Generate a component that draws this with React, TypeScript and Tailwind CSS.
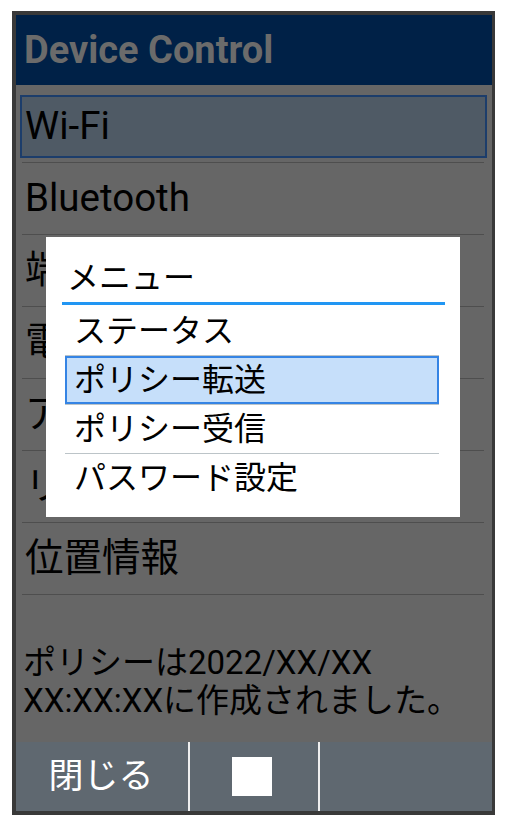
import React from 'react'

const rows = ['Wi-Fi', 'Bluetooth', '端末情報', '電話帳', 'アプリ管理', 'リモートロック', '位置情報']
const menu = ['ステータス', 'ポリシー転送', 'ポリシー受信', 'パスワード設定']

export default function App() {
  return (
    <div className="min-h-screen bg-white pt-[11px] pl-[12px] font-['Roboto','Noto_Sans_CJK_JP',sans-serif]">
      <div className="relative w-[483px] h-[804px] border-t-[4px] border-b-[4px] border-l-[4px] border-r-[3px] border-[#393939] bg-[#666666] flex flex-col">
        <div className="h-[70px] shrink-0 bg-[#002147] flex items-center pl-[8px]">
          <span className="text-[38px] font-bold text-[#6b6b6b] leading-none">Device Control</span>
        </div>

        <div className="mt-[6px] flex flex-col">
          {rows.map((label, i) => (
            <div key={label} className="h-[72px] flex flex-col">
              <div className="h-[71px] pt-[4px] pb-[4px] pl-[4px] pr-[5px] flex">
                <div
                  className={
                    i === 0
                      ? 'flex-1 flex items-center border-2 border-[#1c3d6b] bg-[#4f5a65] pl-[3px]'
                      : 'flex-1 flex items-center border-2 border-transparent pl-[3px]'
                  }
                >
                  <span className="text-[38.5px] text-black leading-none whitespace-nowrap">{label}</span>
                </div>
              </div>
              <div className="h-px ml-[6px] mr-[8px] bg-[#4e4e4e]" />
            </div>
          ))}
        </div>

        <div className="flex-1 flex flex-col justify-end pl-[7px] pb-[22px] text-[33px] leading-[38px] text-black">
          <div>ポリシーは2022/XX/XX</div>
          <div>XX:XX:XXに作成されました。</div>
        </div>

        <div className="h-[69px] shrink-0 bg-[#5f6870] flex">
          <div className="w-[172px] flex items-center justify-center pr-[2px] text-white text-[35px] leading-none">閉じる</div>
          <div className="w-[2px] bg-[#eeeeee]" />
          <div className="w-[128px] flex items-center justify-center pr-[4px]">
            <div className="w-[40px] h-[39px] bg-white" />
          </div>
          <div className="w-[2px] bg-[#eeeeee]" />
          <div className="flex-1" />
        </div>

        <div className="absolute left-[30px] top-[222px] w-[414px] h-[280px] bg-white flex flex-col">
          <div className="h-[65px] flex items-end pl-[21px] pb-[8px]">
            <span className="text-[32px] leading-none text-black">メニュー</span>
          </div>
          <div className="h-[3px] ml-[16px] mr-[15px] bg-[#2196f3]" />
          <div className="ml-[19px] mr-[21px] mt-[2px] flex flex-col">
            {menu.map((m, i) => (
              <div key={m} className="flex flex-col">
                <div
                  className={
                    i === 1
                      ? 'h-[48px] flex items-center pl-[7px] border-2 border-[#3584e4] bg-[#c6dffa] text-[32px] leading-none text-black'
                      : 'h-[48px] flex items-center pl-[9px] text-[32px] leading-none text-black'
                  }
                >
                  {m}
                </div>
                {i < menu.length - 1 && <div className="h-px bg-[#bcc4c8]" />}
              </div>
            ))}
          </div>
        </div>
      </div>
    </div>
  )
}
